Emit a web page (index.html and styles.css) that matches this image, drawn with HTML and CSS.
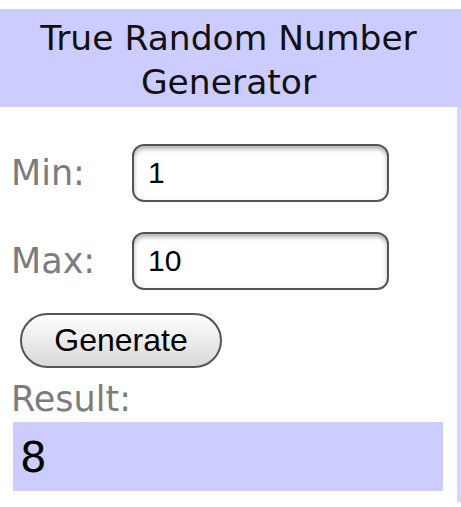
FILE: index.html
```
<!DOCTYPE html>
<html lang="en">
<head>
    <meta charset="UTF-8">
    <meta name="viewport" content="width=device-width, initial-scale=1.0">
    <title>True Random Number Generator</title>
    <link rel="stylesheet" href="styles.css">
</head>
<body>
    <div class="page">
        <header class="banner">
            <h1>True Random Number<br>Generator</h1>
        </header>
        <main class="panel">
            <form class="range-form">
                <label for="min">Min:</label>
                <input type="text" id="min" name="min" value="1">
                <label for="max">Max:</label>
                <input type="text" id="max" name="max" value="10">
            </form>
            <button type="button" class="generate">Generate</button>
            <div class="result-label">Result:</div>
            <div class="result">8</div>
        </main>
    </div>
</body>
</html>
```

FILE: styles.css
```
body {
    margin: 0;
    background: #fff;
    font-family: "DejaVu Sans", Verdana, sans-serif;
}

.page {
    padding-top: 9px;
}

/* Titre */
.banner {
    background: #ccccff;
    height: 98px;
    box-sizing: border-box;
    padding: 7px 4px 0 0;
    text-align: center;
}

.banner h1 {
    margin: 0;
    font-size: 34.5px;
    font-weight: normal;
    line-height: 44px;
    color: #111;
}

.panel {
    border-right: 4px solid #d6d6fb;
    padding: 37px 0 11px 0;
}

.range-form {
    display: grid;
    grid-template-columns: 121px 257px;
    align-items: center;
    row-gap: 30px;
    padding-left: 11px;
    margin: 0;
}

label,
.result-label {
    font-size: 35px;
    color: #7c7c7c;
}

input {
    height: 58px;
    box-sizing: border-box;
    border: 2px solid #555;
    border-radius: 12px;
    padding: 0 14px;
    font-family: "Liberation Sans", Arial, sans-serif;
    font-size: 30px;
    color: #000;
    background: #fff;
    box-shadow: inset 0 3px 4px rgba(0, 0, 0, 0.3);
    outline: none;
}

.generate {
    display: block;
    margin: 23px 0 0 20px;
    width: 202px;
    height: 55px;
    border: 2px solid #555;
    border-radius: 28px;
    background: linear-gradient(#fefefe, #d9d9d9);
    font-family: "Liberation Sans", Arial, sans-serif;
    font-size: 32px;
    color: #000;
    padding: 0;
}

.result-label {
    margin: 12px 0 0 11px;
    line-height: 38px;
}

.result {
    margin: 4px 0 0 13px;
    width: 430px;
    height: 69px;
    box-sizing: border-box;
    padding: 3px 0 0 7px;
    background: #ccccff;
    font-size: 42px;
    line-height: 66px;
    color: #000;
}
```
